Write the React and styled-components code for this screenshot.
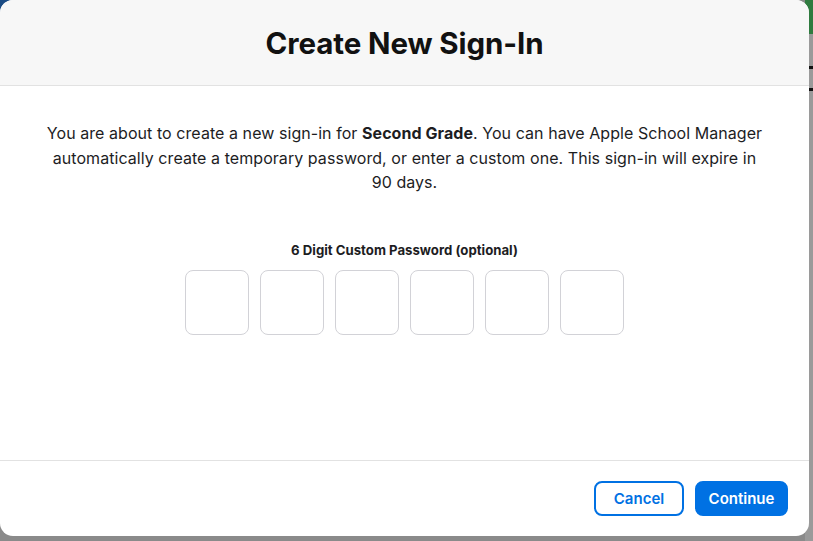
import React from "react";
import styled, { createGlobalStyle } from "styled-components";

const Global = createGlobalStyle`
  html, body { margin: 0; padding: 0; }
  body {
    font-family: Inter, "Noto Sans", "Liberation Sans", sans-serif;
    color: #1d1d1f;
    -webkit-font-smoothing: antialiased;
  }
`;

const Stage = styled.div`
  width: 813px;
  height: 541px;
  overflow: hidden;
  background:
    linear-gradient(#2f7b3f, #2f7b3f) right top / 8px 34px no-repeat,
    linear-gradient(#111, #111) right 0 top 66px / 8px 3px no-repeat,
    linear-gradient(#111, #111) right 0 top 88px / 8px 3px no-repeat,
    linear-gradient(#1b4b84, #1b4b84) left top / 14px 14px no-repeat,
    linear-gradient(to right, #8a8a8a 0, #8a8a8a 805px, #9a9a9a 805px),
    #7a7a7a;
  display: flex;
  align-items: flex-start;
`;

const Modal = styled.div`
  width: 809px;
  height: 536px;
  border-radius: 13px;
  overflow: hidden;
  background: #fff;
  display: flex;
  flex-direction: column;
`;

const Header = styled.header`
  height: 85px;
  flex: 0 0 auto;
  background: #f7f7f7;
  border-bottom: 1px solid #e2e2e2;
  display: flex;
  align-items: center;
  justify-content: center;
`;

const Title = styled.h1`
  margin: 0;
  font-size: 29.5px;
  font-weight: 700;
  letter-spacing: -0.1px;
  color: #111;
`;

const Body = styled.main`
  flex: 1;
  display: flex;
  flex-direction: column;
  align-items: center;
  padding-top: 35px;
`;

const Message = styled.p`
  margin: 0;
  font-size: 16px;
  letter-spacing: 0.06px;
  line-height: 24.5px;
  text-align: center;
  color: #1d1d1f;
  strong { font-weight: 700; }
`;

const FieldLabel = styled.div`
  margin-top: 47px;
  font-size: 13.2px;
  font-weight: 700;
  line-height: 16px;
  color: #1d1d1f;
`;

const Digits = styled.div`
  margin-top: 12px;
  display: flex;
  gap: 11px;
`;

const DigitBox = styled.input`
  width: 64px;
  height: 65px;
  box-sizing: border-box;
  border: 1px solid #d2d2d7;
  border-radius: 8px;
  background: #fff;
  text-align: center;
  font-size: 24px;
  font-family: inherit;
  outline: none;
  padding: 0;
`;

const Footer = styled.footer`
  height: 75px;
  flex: 0 0 auto;
  border-top: 1px solid #e2e2e2;
  display: flex;
  align-items: center;
  justify-content: flex-end;
  gap: 11px;
  padding-right: 21px;
`;

const Button = styled.button`
  height: 35px;
  width: ${(p) => (p.$primary ? "93px" : "90px")};
  box-sizing: border-box;
  padding: 0;
  border-radius: 8px;
  font-family: inherit;
  font-size: 15px;
  font-weight: 600;
  cursor: pointer;
  border: 2px solid #0071e3;
  background: ${(p) => (p.$primary ? "#0071e3" : "#fff")};
  color: ${(p) => (p.$primary ? "#fff" : "#0071e3")};
`;

export default function App() {
  return (
    <Stage>
      <Global />
      <Modal>
        <Header>
          <Title>Create New Sign-In</Title>
        </Header>
        <Body>
          <Message>
            You are about to create a new sign-in for <strong>Second Grade</strong>. You can have Apple School Manager
            <br />
            automatically create a temporary password, or enter a custom one. This sign-in will expire in
            <br />
            90 days.
          </Message>
          <FieldLabel>6 Digit Custom Password (optional)</FieldLabel>
          <Digits>
            {Array.from({ length: 6 }).map((_, i) => (
              <DigitBox key={i} maxLength={1} aria-label={`Digit ${i + 1}`} />
            ))}
          </Digits>
        </Body>
        <Footer>
          <Button>Cancel</Button>
          <Button $primary>Continue</Button>
        </Footer>
      </Modal>
    </Stage>
  );
}
